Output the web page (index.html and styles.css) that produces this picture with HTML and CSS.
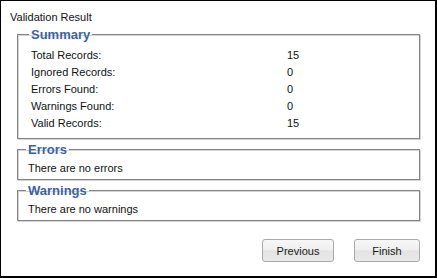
FILE: index.html
```html
<!DOCTYPE html>
<html lang="en">
<head>
    <meta charset="UTF-8">
    <title>Validation Result</title>
    <link rel="stylesheet" href="styles.css">
</head>
<body>
    <div class="window">
        <div class="title">Validation Result</div>

        <fieldset class="group summary">
            <legend>Summary</legend>
            <div class="row"><span class="label">Total Records:</span><span class="value">15</span></div>
            <div class="row"><span class="label">Ignored Records:</span><span class="value">0</span></div>
            <div class="row"><span class="label">Errors Found:</span><span class="value">0</span></div>
            <div class="row"><span class="label">Warnings Found:</span><span class="value">0</span></div>
            <div class="row"><span class="label">Valid Records:</span><span class="value">15</span></div>
        </fieldset>

        <fieldset class="group">
            <legend>Errors</legend>
            <div class="message">There are no errors</div>
        </fieldset>

        <fieldset class="group">
            <legend>Warnings</legend>
            <div class="message">There are no warnings</div>
        </fieldset>

        <div class="buttons">
            <button class="btn previous">Previous</button>
            <button class="btn finish">Finish</button>
        </div>
    </div>
</body>
</html>
```

FILE: styles.css
```css
html, body {
    margin: 0;
    padding: 0;
    background: #fff;
}
body {
    font-family: "Liberation Sans", Arial, sans-serif;
    font-size: 11px;
    color: #111;
}
.window {
    box-sizing: border-box;
    width: 437px;
    height: 278px;
    border-top: 1px solid #000;
    border-left: 1px solid #000;
    border-right: 2px solid #000;
    border-bottom: 2px solid #000;
    padding: 10px 15px 0 9px;
}
.title {
    line-height: 13px;
    margin-bottom: 3px;
}
.group {
    margin: 0 0 3px 7px;
    padding: 3px 10px 2px 10px;
    border: 1px solid #858585;
    box-shadow: inset 1px 1px 0 #d4d4d4, 1px 1px 0 #d4d4d4;
}
.group legend {
    font-size: 13px;
    font-weight: bold;
    line-height: 15px;
    color: #3a62a8;
    padding: 0 2px;
    margin-left: -2px;
}
.summary {
    padding: 5px 10px 6px 13px;
}
.row {
    display: flex;
    height: 17px;
    line-height: 17px;
}
.label {
    width: 256px;
}
.message {
    line-height: 17px;
}
.buttons {
    display: flex;
    justify-content: flex-end;
    gap: 20px;
    margin-top: 18px;
}
.btn {
    font-family: "Liberation Sans", Arial, sans-serif;
    font-size: 11px;
    color: #1a1a1a;
    height: 23px;
    padding: 0;
    border: 1px solid #a9a9a9;
    border-radius: 3px;
    background: linear-gradient(#f7f7f7 0%, #efefef 48%, #e3e3e3 52%, #e9e9e9 100%);
}
.previous {
    width: 72px;
}
.finish {
    width: 66px;
}
```
